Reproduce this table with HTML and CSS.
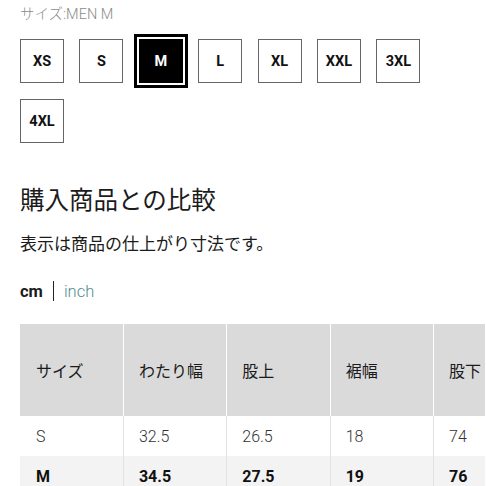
FILE: index.html
```html
<!DOCTYPE html>
<html lang="ja">
<head>
<meta charset="utf-8">
<link rel="stylesheet" href="styles.css">
</head>
<body>
<div class="page">
  <div class="size-label">サイズ:MEN M</div>
  <div class="sizes">
    <button class="size">XS</button>
    <button class="size">S</button>
    <button class="size selected">M</button>
    <button class="size">L</button>
    <button class="size">XL</button>
    <button class="size">XXL</button>
    <button class="size">3XL</button>
    <button class="size">4XL</button>
  </div>
  <h2 class="heading">購入商品との比較</h2>
  <p class="note">表示は商品の仕上がり寸法です。</p>
  <div class="units">
    <span class="unit active">cm</span>
    <span class="sep"></span>
    <span class="unit link">inch</span>
  </div>
  <div class="table-wrap">
    <table class="chart">
      <thead>
        <tr><th>サイズ</th><th>わたり幅</th><th>股上</th><th>裾幅</th><th>股下</th></tr>
      </thead>
      <tbody>
        <tr><td>S</td><td>32.5</td><td>26.5</td><td>18</td><td>74</td></tr>
        <tr class="current"><td>M</td><td>34.5</td><td>27.5</td><td>19</td><td>76</td></tr>
      </tbody>
    </table>
  </div>
</div>
</body>
</html>
```

FILE: styles.css
```css
html, body {
  margin: 0;
  padding: 0;
  background: #fff;
}
body {
  font-family: Roboto, "Noto Sans CJK JP", sans-serif;
  color: #1b1b1b;
  width: 486px;
  height: 486px;
  overflow: hidden;
}
.page {
  padding: 6px 0 0 20px;
}
.size-label {
  font-size: 14.5px;
  font-weight: 300;
  color: #8a8a8a;
  line-height: 18px;
}
.sizes {
  display: flex;
  flex-wrap: wrap;
  column-gap: 15.4px;
  row-gap: 16px;
  width: 420px;
  margin-top: 15px;
}
.size {
  width: 44px;
  height: 44px;
  box-sizing: border-box;
  border: 1px solid #666;
  background: #fff;
  color: #111;
  font-family: Roboto, "Liberation Sans", sans-serif;
  font-weight: 700;
  font-size: 14.5px;
  padding: 0;
  display: flex;
  align-items: center;
  justify-content: center;
}
.size.selected {
  background: #000;
  color: #fff;
  border-color: #000;
  box-shadow: 0 0 0 2px #fff, 0 0 0 5px #000;
}
.heading {
  margin: 39px 0 0;
  font-family: "Noto Sans CJK JP", sans-serif;
  font-weight: 400;
  font-size: 24.5px;
  line-height: 34px;
}
.note {
  margin: 15px 0 0;
  font-family: "Noto Sans CJK JP", sans-serif;
  font-size: 17px;
  line-height: 24px;
}
.units {
  display: flex;
  align-items: center;
  margin-top: 26px;
  height: 20px;
  font-size: 16.5px;
}
.unit.active {
  font-weight: 700;
}
.sep {
  width: 1px;
  height: 20px;
  background: #222;
  margin: 0 10px 0 10px;
}
.unit.link {
  color: #4f8e94;
  font-weight: 300;
}
.table-wrap {
  margin-top: 23px;
  width: 465px;
  overflow: hidden;
}
.chart {
  border-collapse: collapse;
  table-layout: fixed;
  width: 517px;
}
.chart th, .chart td {
  width: 103.4px;
  text-align: left;
  padding: 0 0 0 15px;
  font-size: 16px;
  box-sizing: border-box;
}
.chart th {
  background: #dadada;
  height: 92px;
  font-family: "Noto Sans CJK JP", sans-serif;
  font-weight: 400;
  border-right: 1px solid #fff;
}
.chart th:first-child, .chart td:first-child {
  padding-left: 16px;
}
.chart td {
  height: 40px;
  font-weight: 300;
  color: #333;
  border-right: 1px solid #e2e2e2;
}
.chart tr.current td {
  background: #f3f3f3;
  font-weight: 700;
  color: #111;
}
```
